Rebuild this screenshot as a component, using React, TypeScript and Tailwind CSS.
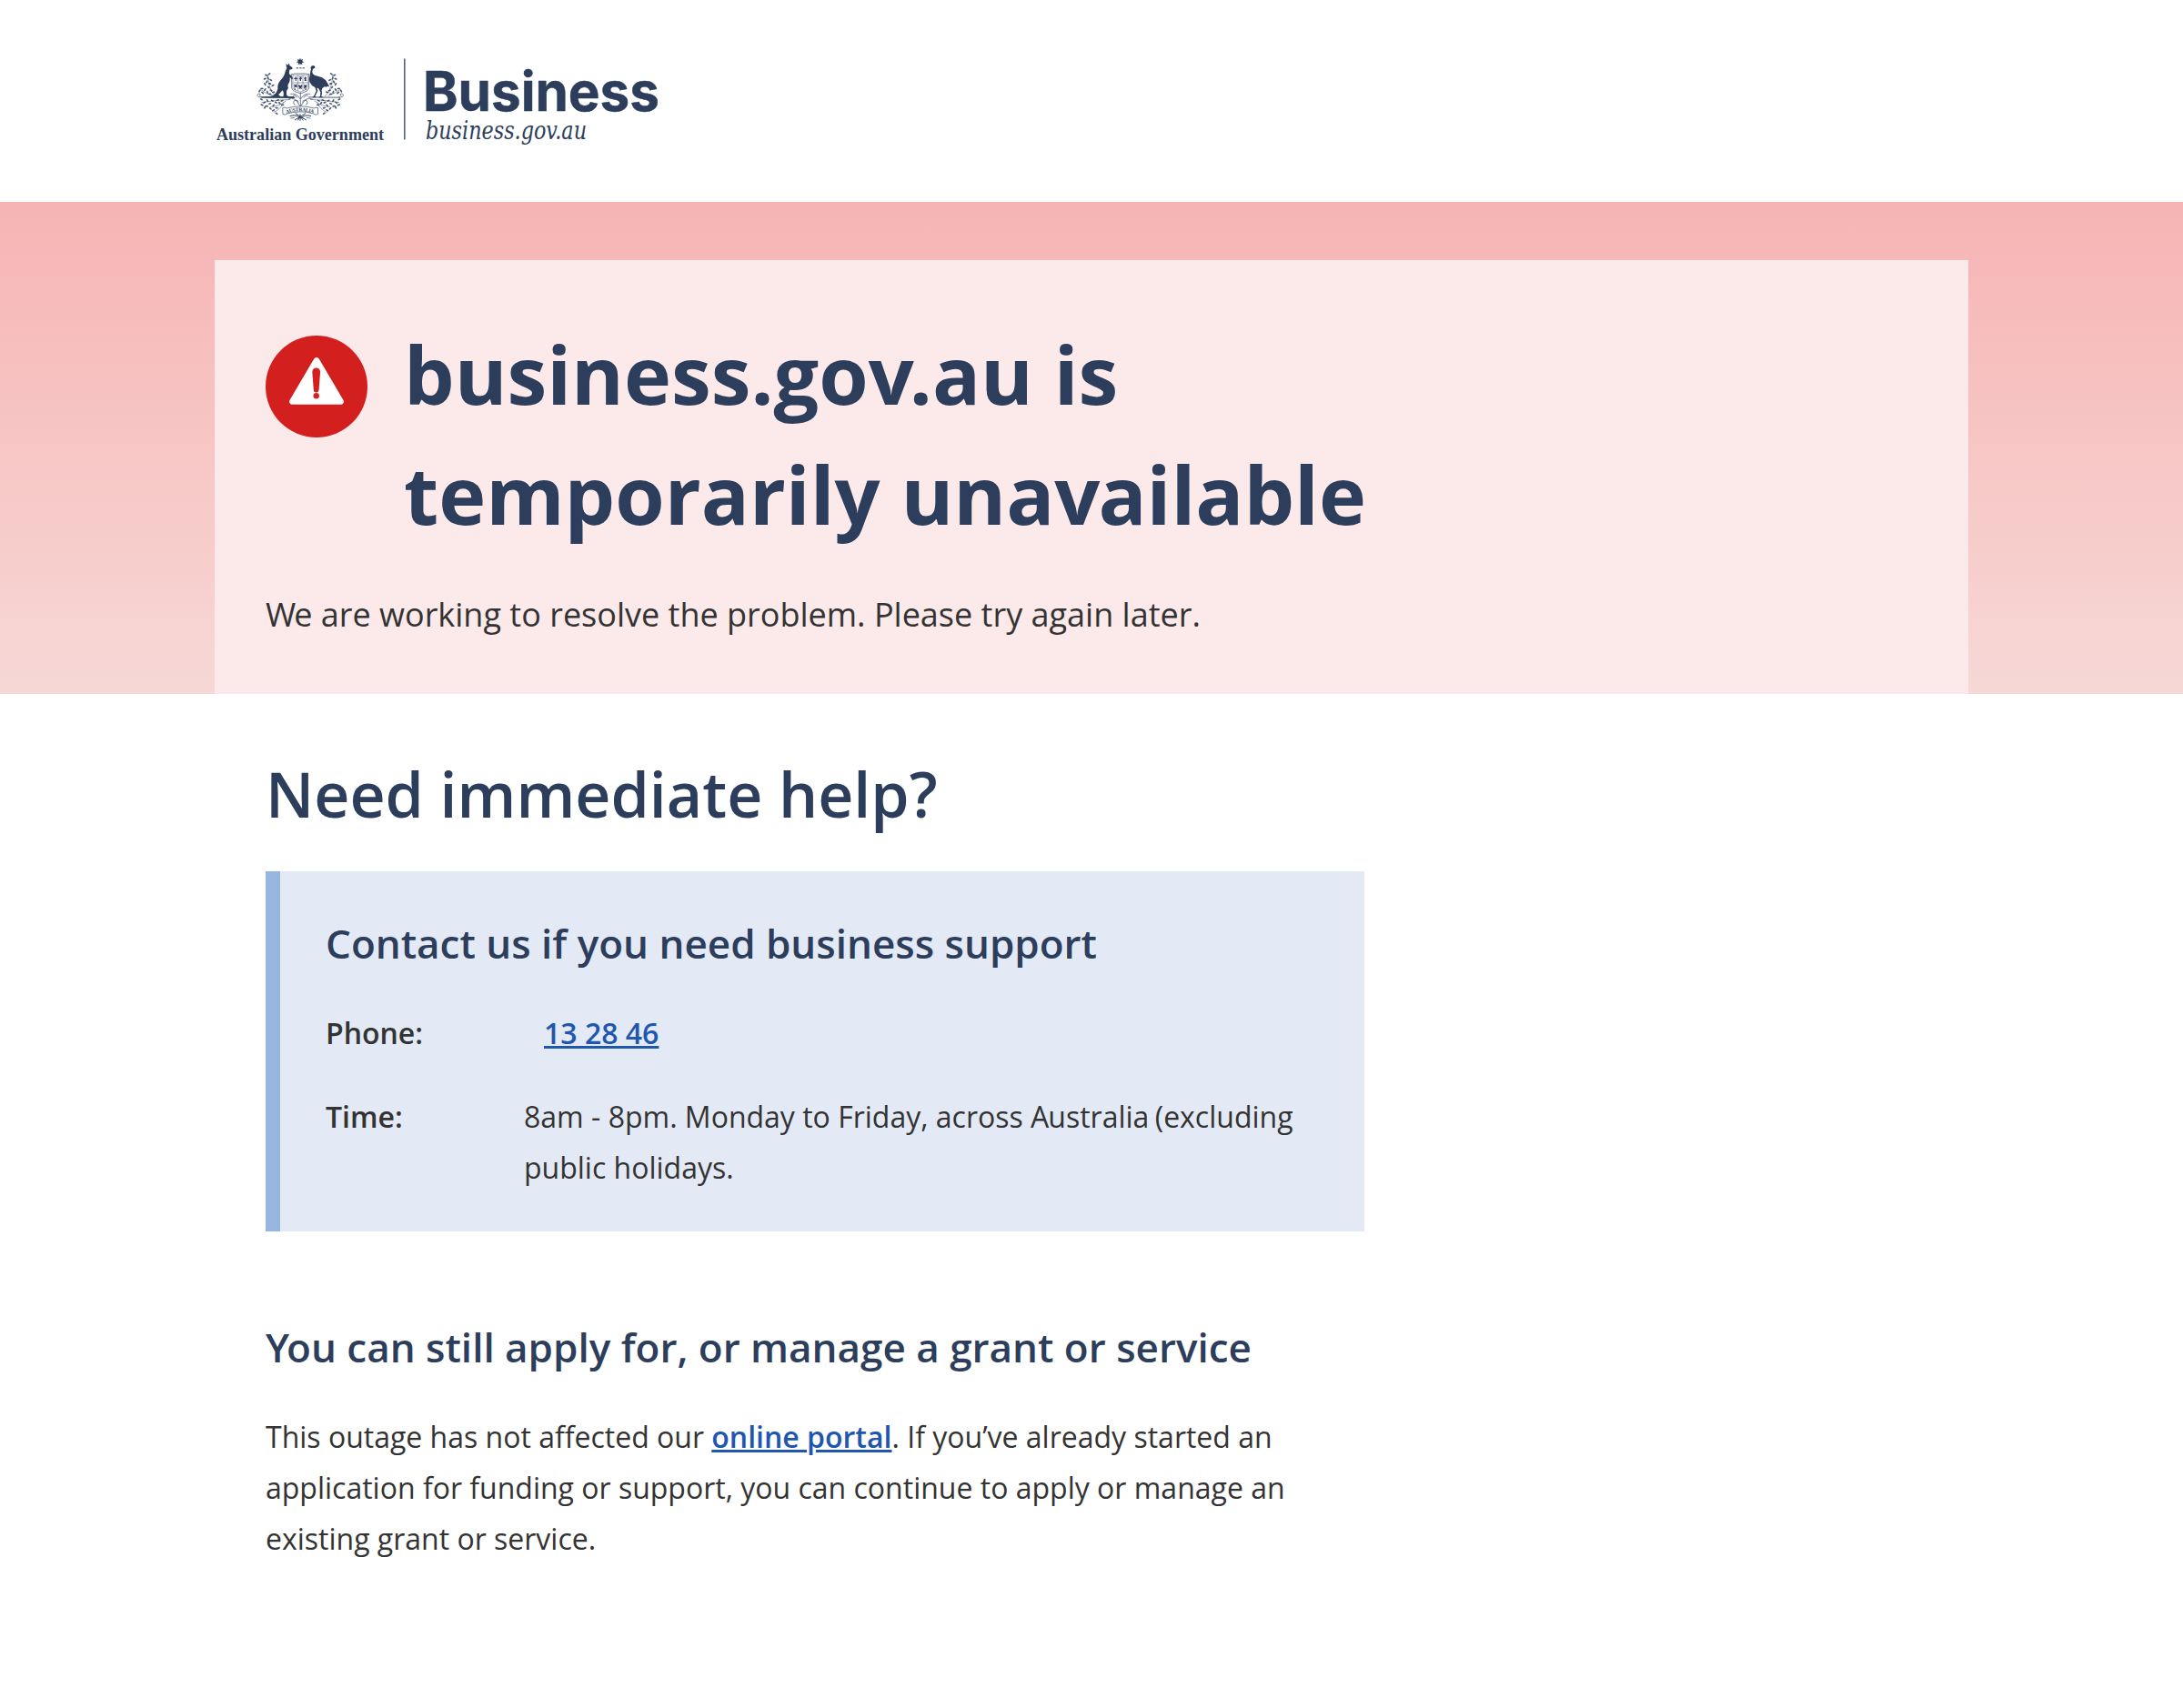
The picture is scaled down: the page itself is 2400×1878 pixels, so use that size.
import React from "react";

const NAVY = "#2d3e5c";

/* Leaf positions of the wattle sprays: x, y, rotation. Mirrored for the other side. */
const LEAVES: [number, number, number][] = [
  [38, 62, 20], [48, 58, -40], [44, 72, 70], [34, 74, -20], [53, 78, 30], [40, 84, -60],
  [50, 90, 10], [34, 92, 60], [60, 96, -30], [46, 102, 50], [24, 106, 0], [34, 110, -50],
  [54, 112, 20], [42, 118, 80], [26, 120, 40], [62, 118, -10], [16, 114, -60], [50, 124, 0],
  [22, 142, 30], [32, 152, -30], [24, 160, 20], [42, 146, 60], [50, 156, -20], [40, 164, 10],
  [58, 146, 30], [62, 162, -50], [70, 152, 20], [76, 144, -20], [52, 172, 40], [62, 178, -30],
  [72, 170, 10], [82, 154, 50], [90, 146, -30], [72, 188, 30], [34, 168, -60], [92, 160, 0],
];

function Spray() {
  return (
    <g>
      {LEAVES.map(([x, y, r], i) => (
        <ellipse key={i} cx={x} cy={y} rx="5.4" ry="2.7" transform={`rotate(${r} ${x} ${y})`} fill={NAVY} opacity="0.85" />
      ))}
      <g fill="none" stroke={NAVY} strokeWidth="1.8" opacity="0.8">
        <path d="M43 60 Q44 92 56 116 L70 132" />
        <path d="M18 108 Q34 122 60 130" />
        <path d="M118 142 Q70 144 22 152" />
        <path d="M104 146 Q80 166 52 166 M96 150 Q84 178 62 184" />
        <path d="M24 134 Q8 136 9 127 Q11 120 18 124 Q21 129 15 130" strokeWidth="2.4" />
      </g>
    </g>
  );
}

function Crest() {
  return (
    <g transform="translate(44 12) scale(0.33333)">
      <Spray />
      <g transform="translate(301 0) scale(-1 1)">
        <Spray />
      </g>

      {/* Commonwealth star and torse */}
      <polygon
        fill={NAVY}
        points="150,5 152.8,11.5 159.5,9 156.8,15.5 163,19 156,21 157,28 151.5,24 150,31 148.500,24 143,28 144,21 137,19 143.200,15.500 140.500,9 147.200,11.500"
      />
      <path d="M137 38.500H165" stroke={NAVY} strokeWidth="3" strokeDasharray="7 3.500" fill="none" />

      {/* Shield */}
      <path d="M122 58 Q128 60 131 57 H170 Q173 60 179 58 V104 Q177 116 151 122 Q124 116 122 104Z" fill="#fff" stroke={NAVY} strokeWidth="2" />
      <path d="M126 62H175V103Q172 112 151 117Q129 112 126 103Z" fill="none" stroke={NAVY} strokeWidth="1.200" />
      <path d="M127 87H175M143 62V114M159 62V114" stroke={NAVY} strokeWidth="1.500" />
      <g fill={NAVY}>
        <path d="M134 66h3v5h4v4h-4v6h-3v-6h-4v-4h4z" />
        <path d="M147 67h9l-2 4 2 3-3 2v5h-4v-5l-3-2 3-3z" />
        <path d="M165 65l3 5h4l-3 5 2 6h-7l1-6-4-4h4z" />
        <path d="M129 92l5 2 6-3-1 6 2 6-6-2-5 3 1-6z" />
        <path d="M146 93l5 4 5-4 1 6-3 3 2 6-5-2-5 2 1-6-3-4z" />
        <path d="M162 92l4 3 6-2-1 6 1 4-6 1-4 3 1-7z" />
        <circle cx="133" cy="108" r="2.500" />
        <circle cx="168" cy="108" r="2.500" />
      </g>

      {/* Ground line */}
      <path d="M18 133L128 132L134 138L24 137Z" fill={NAVY} />
      <path d="M178 134.500L282 136" stroke={NAVY} strokeWidth="4.500" opacity="0.550" />

      {/* Kangaroo */}
      <path
        fill={NAVY}
        d="M104 24 L110 29 L113 22 L116 31 Q124 35 126 40 Q122 44 116 43 Q113 50 114 58 Q119 62 122 66 L127 73 L122 75 L116 68 Q118 82 110 92 Q108 98 111 104 Q104 112 105 122 L106 129 L116 134 H94 Q98 118 91 112 Q86 120 78 126 L88 134 H20 Q40 133 54 131 Q70 128 76 108 Q74 92 84 80 Q95 70 99 58 Q101 46 106 38 Q103 32 104 24Z"
      />

      {/* Emu */}
      <path
        fill={NAVY}
        d="M184 38 Q186 30 192 30 Q200 31 199 38 Q195 39 192 42 Q188 50 192 58 Q196 63 208 65 Q224 68 234 78 Q242 88 244 100 Q238 98 236 101 Q230 98 226 103 Q222 104 221 112 L222 122 L220 132 L228 136 H210 L216 131 L217 118 L210 105 L205 104 L208 114 L199 131 L204 136 H190 L196 129 L203 114 L199 102 Q186 96 181 84 Q178 74 182 62 Q183 52 186 42Z"
      />

      {/* Stems and scroll beneath the shield */}
      <g fill="none" stroke={NAVY} strokeWidth="2">
        <path d="M151 118V170M150 140Q138 120 118 124M152 140Q164 120 184 124" />
        <path d="M150 165Q132 128 110 142M152 165Q170 128 192 142" />
        <path d="M134 160a8 8 0 1 1 10-8M168 160a8 8 0 1 0-10-8M126 130q8-6 14 6M176 130q-8-6-14 6" />
      </g>
      <path d="M92 170 Q100 166 106 171 Q151 158 195 171 Q201 166 209 170 L208 190 Q202 196 194 189 Q151 176 107 189 Q99 196 93 190Z" fill="#fff" stroke={NAVY} strokeWidth="2" />
      <path id="scroll" d="M104 189 Q151 173 197 189" fill="none" />
      <text fontSize="17" fontWeight="700" fill={NAVY} fontFamily="'Liberation Serif', serif">
        <textPath href="#scroll" textLength="92">AUSTRALIA</textPath>
      </text>
      <g fill="none" stroke={NAVY} strokeWidth="3">
        <path d="M116 197Q136 190 152 204Q166 190 186 197" />
        <path d="M132 210L168 188M170 210L134 188M150 190V212M142 211L150 198L160 211" />
        <path d="M118 204l14-2M184 204l-14-2" strokeWidth="2" />
      </g>
    </g>
  );
}

function Logo() {
  return (
    <svg width="500" height="120" viewBox="0 0 500 120" role="img" aria-label="Australian Government Business" className="block">
      <Crest />
      <text x="2" y="103.500" fontSize="19" fontWeight="700" textLength="184" lengthAdjust="spacingAndGlyphs" fill={NAVY} fontFamily="'Liberation Serif', serif">
        Australian Government
      </text>
      <rect x="208.200" y="14.500" width="1.300" height="89" fill={NAVY} />
      <text x="229" y="72" fontSize="60.500" fontWeight="650" textLength="260" lengthAdjust="spacingAndGlyphs" fill={NAVY} stroke={NAVY} strokeWidth="0.500" fontFamily="Inter, sans-serif">
        Business
      </text>
      <text x="232" y="102.500" fontSize="27" fontStyle="italic" textLength="177" lengthAdjust="spacingAndGlyphs" fill={NAVY} fontFamily="'DejaVu Serif', serif">
        business.gov.au
      </text>
    </svg>
  );
}

function WarningBadge() {
  return (
    <svg width="112" height="112" viewBox="0 0 112 112" className="block shrink-0" aria-hidden="true">
      <circle cx="56" cy="56" r="56" fill="#d3201f" />
      <path
        d="M53.100 25.700a3.400 3.400 0 0 1 5.800 0L85.500 71a3.200 3.200 0 0 1-2.800 4.800H29.300A3.200 3.200 0 0 1 26.500 71Z"
        fill="#fff"
      />
      <path d="M51.300 39.800a4.400 4.400 0 0 1 8.800 0L58.600 59.600a2.900 2.900 0 0 1-5.800 0Z" fill="#d3201f" />
      <circle cx="55.700" cy="66.300" r="3.200" fill="#d3201f" />
    </svg>
  );
}

export default function App() {
  return (
    <div className="min-h-[1878px] w-full bg-white font-['Open_Sans',sans-serif] text-[#333333]">
      <header className="h-[222px] pt-[50px] pl-[236px]">
        <Logo />
      </header>

      <section className="h-[541px] bg-linear-to-b from-[#f6b4b4] to-[#f6d8d6] px-[236px] pt-16">
        <div className="h-full bg-[#fce9e9] px-14 pt-[59px]">
          <div className="flex gap-10">
            <div className="pt-6">
              <WarningBadge />
            </div>
            <h1 className="text-[88px] leading-[132px] font-bold text-[#2d3e5c]">
              business.go<span className="tracking-[-5px]">v</span>.au is
              <br />
              temporarily una<span className="tracking-[-2px]">v</span>ailable
            </h1>
          </div>
          <p className="mt-[35px] text-[36px] leading-[64px]">
            <span className="tracking-[-2px]">W</span>e are working to resolve the problem. Please try again later.
          </p>
        </div>
      </section>

      <main className="ml-[292px] w-[1208px] pt-[59px]">
        <h2 className="text-[68px] leading-[102px] font-semibold text-[#2d3e5c]">Need immediate help?</h2>

        <section className="mt-[34px] h-[396px] border-l-[16px] border-[#96b6e0] bg-[#e3eaf6] px-[50px] pt-[46px]">
          <h3 className="text-[44px] leading-[66px] font-semibold text-[#2d3e5c]">Contact us if you need business support</h3>
          <dl className="mt-[38px] text-[32px] leading-[56px]">
            <div className="flex">
              <dt className="w-[240px] font-semibold">Phone:</dt>
              <dd>
                <a href="#phone" className="font-semibold text-[#1f56ae] underline">13 28 46</a>
              </dd>
            </div>
            <div className="mt-9 flex">
              <dt className="w-[218px] font-semibold">Time:</dt>
              <dd>
                8am - 8pm. Monday to Friday, across <span className="tracking-[-1px]">A</span>ustralia<span className="tracking-[-2px]"> </span>(excluding
                <br />
                public holidays.
              </dd>
            </div>
          </dl>
        </section>

        <section className="pt-[94px]">
          <h3 className="text-[44px] leading-[66px] font-semibold text-[#2d3e5c]">
            <span className="tracking-[-3px]">Y</span>ou can still apply for, or manage a grant or service
          </h3>
          <p className="mt-[38px] text-[32px] leading-[56px]">
            This outage has not affected our{" "}
            <a href="#portal" className="font-semibold text-[#1f56ae] underline">online portal</a>. If you’ve already started an
            <br />
            application for funding or support, you can continue to apply or manage an
            <br />
            existing grant or service.
          </p>
        </section>
      </main>
    </div>
  );
}
